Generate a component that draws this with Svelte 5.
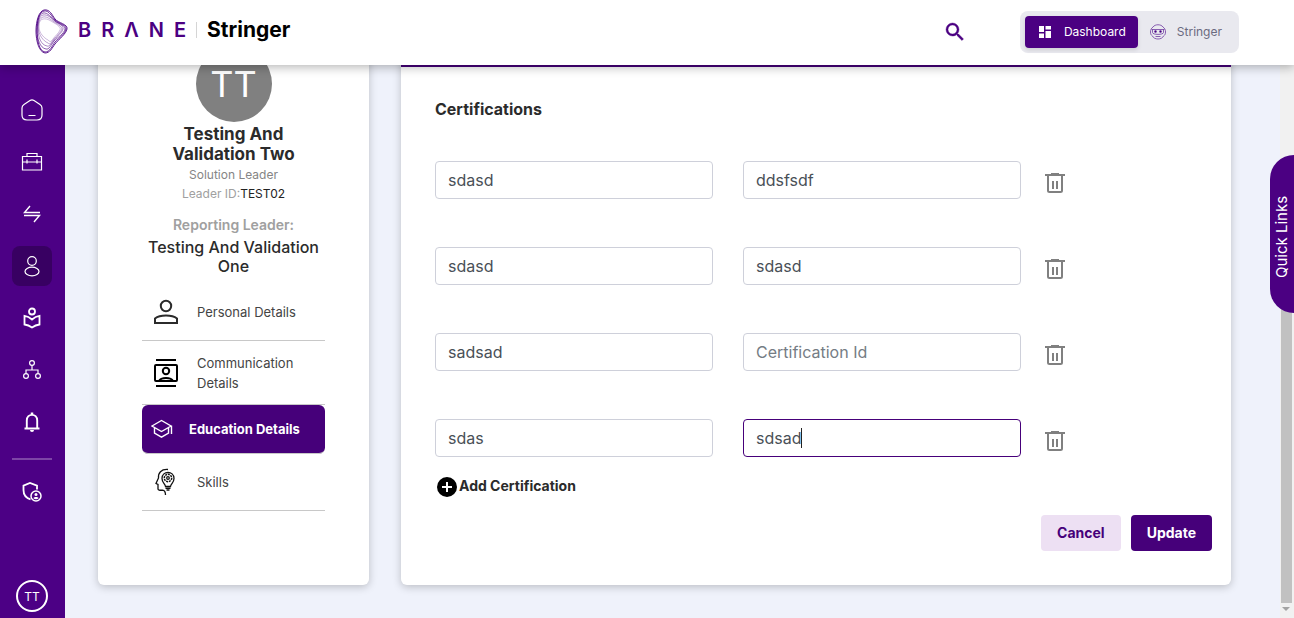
<script>
  let rows = $state([
    { name: 'sdasd', id: 'ddsfsdf' },
    { name: 'sdasd', id: 'sdasd' },
    { name: 'sadsad', id: '' },
    { name: 'sdas', id: 'sdsad', editing: true }
  ]);

  const links = ['Home', 'Toolkit', 'Transfers', 'Profile', 'Learning', 'Organisation', 'Notifications'];

  const remove = (i) => rows.splice(i, 1);
  const add = () => rows.push({ name: '', id: '' });
</script>

<div class="shell">
  <header>
    <a class="brand" href="#home" aria-label="Home">
      <svg class="mark" width="34" height="46" viewBox="0 0 34 46" fill="none" stroke="#4b0082" stroke-width="0.9">
        <path d="M9 1C15 0 17 6 20 10C23 14 33 15 32 20C31 25 24 30 20 35C17 39 15 44 10 44C4 43 1 32 1 22C1 12 4 2 9 1Z" />
        <path d="M9 2C14 1 17 8 20 11C24 15 32 16 31 20C30 25 24 29 20 33C17 37 15 43 10 43C4 42 2 31 2 21C2 12 4 3 9 2Z" opacity=".9" />
        <path d="M8 4C13 3 16 9 20 12C24 15 31 17 30 20C29 25 23 28 19 32C16 36 14 41 11 40C5 39 2 30 2 21C2 13 4 5 8 4Z" opacity=".7" />
        <path d="M8 6C13 5 17 10 21 13C24 15 29 17 28 20C27 24 22 27 19 31C16 35 14 38 12 37C6 36 3 28 3 20C3 13 4 7 8 6Z" opacity=".5" />
        <path d="M8 8C13 7 17 12 21 14C24 16 27 18 27 20C26 24 21 27 18 31C16 34 15 36 13 34C8 32 4 26 3 19C3 13 5 9 8 8Z" opacity=".4" />
        <path d="M8 10C13 9 17 13 21 15C24 17 26 19 25 21C24 24 20 27 18 30C16 33 15 33 13 31C9 29 4 24 4 18C4 13 5 11 8 10Z" opacity=".3" />
      </svg>
      <span class="word">BRΛNE</span>
      <span class="product">Stringer</span>
    </a>
    <button class="search" aria-label="Search">
      <svg width="24" height="24" viewBox="0 0 24 24" fill="#4b0082" stroke="#4b0082" stroke-width=".4"><path d="M15.500 14h-.79l-.28-.27A6.470 6.470 0 0 0 16 9.500 6.500 6.500 0 1 0 9.500 16c1.610 0 3.090-.59 4.230-1.570l.27.28v.79l5 4.990L20.490 19l-4.990-5zm-6 0C7.010 14 5 11.990 5 9.500S7.010 5 9.500 5 14 7.010 14 9.500 11.990 14 9.500 14z" /></svg>
    </button>
    <nav class="switch" aria-label="Workspace">
      <button class="on">
        <svg width="16" height="16" viewBox="0 0 16 16" fill="#fff"><path d="M2 2h5v6H2zM8.500 2h5.500v3.500H8.500zM8.500 7h5.500v7H8.500zM2 9.500h5V14H2z" /></svg>
        Dashboard
      </button>
      <button>
        <svg width="16" height="16" viewBox="0 0 16 16" fill="none" stroke="#6f3aa0" stroke-width=".8"><path d="M3 3C5 0 11 0 13 3M1.500 5.500h13M3 3C1 4.500.500 6 .500 8S1 11 2.500 12C4 16 12 16 13.500 12C15 11 15.500 10 15.500 8S15 4.500 13 3M2.500 5.500v3C2.500 11 13.500 11 13.500 8.500v-3M5.500 12.500h5" /><circle cx="5.500" cy="7.500" r="1" fill="#4b0082" /><circle cx="10.500" cy="7.500" r="1" fill="#4b0082" /></svg>
        Stringer
      </button>
    </nav>
  </header>

  <div class="body">
    <aside class="rail">
      {#each links as link, i}
        <a href="#{link}" class="tile" class:current={i === 3} aria-label={link}>
          <svg width="24" height="24" viewBox="0 0 24 24" fill="none" stroke="#fff" stroke-width="1.200">
            {#if i === 0}
              <path d="M10 2.500Q12 1.200 14 2.500L20 6.500Q22 7.800 22 10V17Q22 22 17 22H7Q2 22 2 17V10Q2 7.800 4 6.500ZM8.500 17.500h7" />
            {:else if i === 1}
              <path d="M2.500 6.500h19v13.500h-19zM7 6.500v-3h10v3M2.500 12h19M7 9.500v4M17 9.500v4" />
            {:else if i === 2}
              <path d="M10 4L4.500 10.500H20M4 13.500H19.500L14 20" stroke-width="1.400" />
            {:else if i === 3}
              <circle cx="12" cy="7" r="4.300" /><ellipse cx="12" cy="17.500" rx="7" ry="4.300" />
            {:else if i === 4}
              <circle cx="12" cy="5.500" r="3" stroke-width="1.800" /><path d="M12 13.500Q8.500 10.300 4.500 9.800V18.500Q8.500 19 12 21.500Q15.500 19 19.500 18.500V9.800Q15.500 10.300 12 13.500Z" stroke-width="1.800" />
            {:else if i === 5}
              <circle cx="12" cy="5" r="2.400" /><circle cx="6" cy="18" r="2.400" /><circle cx="18" cy="18" r="2.400" /><path d="M12 7.500V12M6 15.500V12H18V15.500" />
            {:else}
              <path d="M4.500 18.500h15M6.800 18V10.500C6.800 3 17.200 3 17.200 10.500V18" stroke-width="1.900" /><path d="M12 2.500v2.500" stroke-width="2.500" /><path d="M10 20h4a2 2 0 0 1-4 0z" fill="#fff" stroke="none" />
            {/if}
          </svg>
        </a>
      {/each}
      <hr />
      <a href="#security" class="tile" aria-label="Security">
        <svg width="24" height="24" viewBox="0 0 24 24" fill="none" stroke="#fff" stroke-width="1.800"><path d="M17 9.500V5.700L10 3L3.500 5.700V10C3.500 14.500 6 18 10.500 19.300" /><circle cx="16" cy="16" r="5" stroke-width="1.500" /><circle cx="16" cy="14.500" r="1.500" fill="#fff" stroke="none" /><path d="M13.200 18C14.500 16.500 17.500 16.500 18.800 18Q16 20.500 13.200 18z" fill="#fff" stroke="none" /></svg>
      </a>
      <button class="me" aria-label="Account">TT</button>
    </aside>

    <main>
      <div class="page">
        <section class="card profile">
          <div class="avatar"><span>TT</span></div>
          <h1>Testing And Validation Two</h1>
          <p class="role">Solution Leader</p>
          <p class="lid">Leader ID:<b>TEST02</b></p>
          <p class="rep">Reporting Leader:</p>
          <p class="lead">Testing And Validation One</p>
          <nav class="menu" aria-label="Profile sections">
            <a href="#personal">
              <svg width="26" height="26" viewBox="0 0 26 26" fill="none" stroke="#2b2b2b" stroke-width="2"><circle cx="13" cy="7" r="5.200" /><path d="M2 24V19.500C7 15.500 19 15.500 24 19.500V24Z" /></svg>
              <span>Personal Details</span>
            </a>
            <a href="#communication" class="tall">
              <svg width="26" height="28" viewBox="0 0 26 28" fill="none" stroke="#000" stroke-width="2"><path d="M3 1H23M3 27H23" /><rect x="2" y="6" width="22" height="16" rx="1" /><circle cx="13" cy="12" r="3.200" /><path d="M6 22C8 18 18 18 20 22" /></svg>
              <span>Communication Details</span>
            </a>
            <a href="#education" class="active">
              <svg width="22" height="20" viewBox="0 0 22 20" fill="none" stroke="#fff" stroke-width="1.400"><path d="M1 7L10.500 1.500L20 7L10.500 12.500ZM3.500 8.500V14L10.500 18.200L17.500 14V8.500M20.500 6.500V15" /></svg>
              <span>Education Details</span>
            </a>
            <a href="#skills">
              <svg width="26" height="28" viewBox="0 0 26 28" fill="none" stroke="#111" stroke-width="1.300"><path d="M15 1.500C8 1 5 5 5.500 10L3 15.500L5 16.500V21Q5 22.500 9.500 22.200Q12.500 22.500 12.500 27" /><path d="M12.500 18.500C12 15.500 9 14.500 9 10.500C9 2.500 21 2.500 21 10.500C21 14.500 18 15.500 17.500 18.500Z" /><circle cx="15" cy="10" r="3.700" stroke-width="1.500" stroke-dasharray="2 .8" /><circle cx="15" cy="10" r="1.300" /><path d="M12.500 20.200h5M13.500 22h3" stroke-width="1.600" /></svg>
              <span>Skills</span>
            </a>
          </nav>
        </section>

        <section class="card form">
          <div class="tabline"></div>
          <form onsubmit={(e) => e.preventDefault()}>
            <h2>Certifications</h2>
            <div class="rows">
              {#each rows as row, i}
                <div class="row">
                  <div class="fields">
                    <div class="field"><input aria-label="Certification Name" placeholder="Certification Name" bind:value={row.name} /></div>
                    <div class="field">
                      <input class:editing={row.editing} aria-label="Certification Id" placeholder="Certification Id" bind:value={row.id} />
                      {#if row.editing}<i class="caret"></i>{/if}
                    </div>
                  </div>
                  <button type="button" class="trash" aria-label="Delete certification" onclick={() => remove(i)}>
                    <svg width="20" height="20" viewBox="0 0 20 20" fill="none" stroke="#808080" stroke-width="2"><path d="M0 2H20M6 1H14M3 2V17.500Q3 19 4.500 19H15.500Q17 19 17 17.500V2M8 8V16M12 8V16" /></svg>
                  </button>
                </div>
              {/each}
            </div>
            <button type="button" class="add" onclick={add}>
              <svg width="24" height="24" viewBox="0 0 24 24"><circle cx="12" cy="13" r="10" /><path d="M12 8v10M7 13h10" stroke="#fff" stroke-width="2" /></svg>
              Add Certification
            </button>
            <div class="actions">
              <button type="button" class="cancel">Cancel</button>
              <button type="submit" class="update">Update</button>
            </div>
          </form>
        </section>
      </div>
    </main>

    <div class="scroll" aria-hidden="true">
      <div class="thumb"></div>
      <svg width="8" height="5" viewBox="0 0 8 5" fill="#a3a3a3"><path d="M0 0h8L4 4z" /></svg>
    </div>
  </div>
  <button class="quick"><span>Quick Links</span></button>
</div>

<style>
  :global(body) { margin: 0; background: #eff2fb; }
  .shell, .shell * { box-sizing: border-box; }
  .shell { font-family: Inter, "Liberation Sans", sans-serif; color: #2b2b2b; min-height: 100vh; display: flex; flex-direction: column; position: relative; }
  button { font: inherit; border: 0; background: none; padding: 0; cursor: pointer; }
  a { color: inherit; text-decoration: none; }
  p, h1, h2 { margin: 0; }
  svg { flex: none; display: block; }

  header { height: 65px; background: #fff; display: flex; align-items: center; padding: 0 55px 2px 35px; box-shadow: 0 2px 10px rgba(0, 0, 0, .3); position: relative; z-index: 2; }
  .brand { display: flex; align-items: center; margin-right: auto; }
  .word { margin: 0 0 4px 9px; font-size: 20px; line-height: 20px; font-weight: 600; letter-spacing: 10px; color: #4b0082; }
  .product { border-left: 1px solid #d5d5d5; padding-left: 10px; margin-bottom: 4px; font-size: 21px; line-height: 16px; font-weight: 700; color: #000; }
  .search { margin-right: 53px; }
  .switch { display: flex; background: #e9e9ef; border-radius: 8px; padding: 5px; }
  .switch button { display: flex; align-items: center; gap: 11px; height: 32px; padding: 0 12px; border-radius: 4px; font-size: 12px; color: #6b6b80; }
  .switch .on { background: #4b0082; color: #fff; box-shadow: 0 2px 4px rgba(0, 0, 0, .12); }

  .body { flex: 1; display: flex; }
  .rail { width: 65px; background: #4c0085; display: flex; flex-direction: column; align-items: center; gap: 12px; padding: 25px 1px 6px 0; }
  .tile { width: 40px; height: 40px; border-radius: 8px; display: flex; align-items: center; justify-content: center; }
  .current { background: #380062; }
  .rail hr { width: 40px; height: 2px; margin: 4px 0 0; border: 0; background: #7d45a6; }
  .me { width: 32px; height: 32px; margin-top: auto; border: 2px solid #fff; border-radius: 50%; color: #fff; font-size: 12px; }

  main { flex: 1; min-width: 0; overflow: hidden; padding: 0 49px 33px 33px; }
  .page { display: grid; grid-template-columns: 271px minmax(0, 1fr); gap: 32px; margin-top: -30px; }
  .card { background: #fff; border-radius: 6px; box-shadow: 0 2px 8px rgba(0, 0, 0, .22); }

  .profile { padding: 11px 44px 0; text-align: center; }
  .avatar { width: 76px; height: 76px; margin: 0 auto 2px; border-radius: 50%; background: #808080; color: #fff; font-size: 36px; line-height: 36px; display: flex; align-items: center; justify-content: center; }
  h1 { font-size: 17px; line-height: 20px; font-weight: 700; padding: 0 20px; }
  .role, .lid { font-size: 12px; line-height: 19px; color: #858585; }
  .role { margin-top: 1px; }
  .lid { color: #a0a0a0; }
  .lid b { font-weight: 400; color: #222; }
  .rep { font-size: 14px; line-height: 20px; font-weight: 600; color: #a0a0a0; margin-top: 12px; }
  .lead { font-size: 16px; line-height: 19px; font-weight: 500; margin-top: 3px; }
  .menu { margin-top: 8px; text-align: left; font-size: 13px; line-height: 20px; color: #444; }
  .menu a { display: flex; align-items: center; gap: 18px; min-height: 57px; padding-left: 11px; border-bottom: 1px solid #c8c8c8; }
  .menu .tall { min-height: 64px; }
  .menu svg { width: 26px; }
  .menu .active { min-height: 49px; padding-left: 9px; color: #fff; font-weight: 700; background: #46007a; border-radius: 6px; gap: 16px; }
  .menu .active svg { width: 22px; }

  .tabline { height: 32px; border-bottom: 2px solid #46007a; }
  form { padding: 30px 19px 34px 34px; }
  h2 { font-size: 16px; line-height: 24px; font-weight: 700; }
  .rows { display: flex; flex-direction: column; gap: 48px; margin-top: 40px; }
  .row { display: flex; align-items: center; gap: 18px; padding-right: 141px; height: 38px; }
  .fields { flex: 1; display: grid; grid-template-columns: 1fr 1fr; gap: 30px; }
  .field { position: relative; display: flex; }
  .field input { width: 100%; min-width: 0; height: 38px; border: 1px solid #ced0da; border-radius: 4px; padding: 0 12px; background: #fff; font-family: inherit; font-size: 16px; color: #495057; outline: 0; }
  .field input::placeholder { color: #757c84; opacity: 1; }
  .field .editing, .field input:focus { border-color: #46007a; }
  .caret { position: absolute; left: 58px; top: 9px; width: 1px; height: 20px; background: #222; }
  .trash { padding: 9px 6px 3px; }
  .add { display: flex; align-items: center; margin-top: 17px; font-size: 14px; line-height: 24px; font-weight: 700; color: #2b2b2b; }
  .actions { display: flex; justify-content: flex-end; gap: 10px; margin-top: 17px; }
  .actions button { height: 36px; padding: 0 16px 2px; border-radius: 4px; font-size: 14px; font-weight: 700; }
  .cancel { background: #ede0f3; color: #46007a; }
  .update { background: #46007a; color: #fff; }

  .scroll { width: 14px; background: #f1f1f1; display: flex; flex-direction: column; align-items: center; padding: 120px 2px 6px 0; }
  .thumb { flex: 1; width: 11px; margin-bottom: 4px; background: #c1c1c1; }
  .quick { position: absolute; z-index: 1; right: 0; top: 155px; width: 24px; height: 158px; padding-top: 5px; border-radius: 24px 0 0 24px; background: #4b0082; color: #fff; font-size: 15px; line-height: 24px; }
  .quick span { display: block; width: 24px; height: 153px; writing-mode: vertical-rl; transform: rotate(180deg); }
</style>
